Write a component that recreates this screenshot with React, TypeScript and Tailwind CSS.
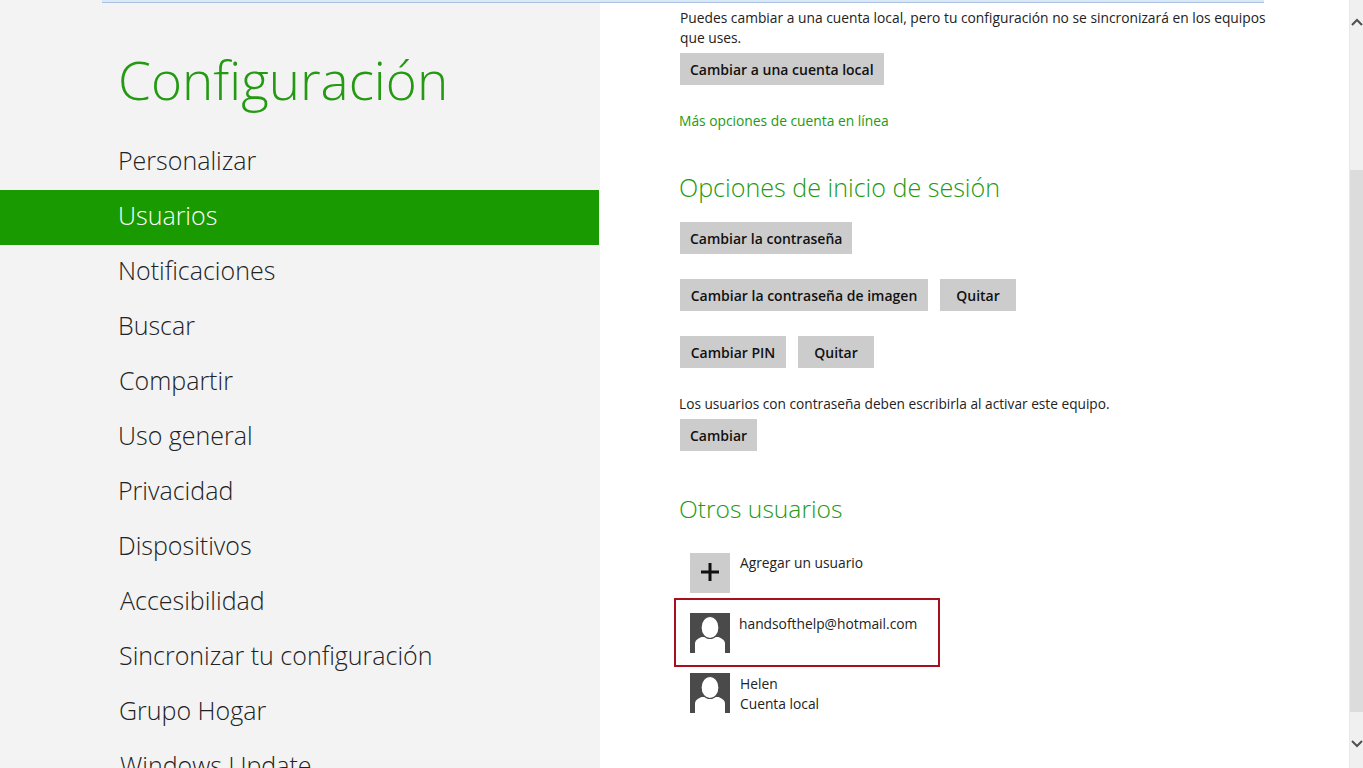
const navItems = [
  { label: 'Personalizar', indent: 'pl-[118px]' },
  { label: 'Usuarios', indent: 'pl-[118px]', active: true },
  { label: 'Notificaciones', indent: 'pl-[118px]' },
  { label: 'Buscar', indent: 'pl-[118px]' },
  { label: 'Compartir', indent: 'pl-[119px]' },
  { label: 'Uso general', indent: 'pl-[118px]' },
  { label: 'Privacidad', indent: 'pl-[118px]' },
  { label: 'Dispositivos', indent: 'pl-[118px]' },
  { label: 'Accesibilidad', indent: 'pl-[120px]' },
  { label: 'Sincronizar tu configuración', indent: 'pl-[119px]' },
  { label: 'Grupo Hogar', indent: 'pl-[119px]' },
  { label: 'Windows Update', indent: 'pl-[120px]' },
]

function GrayButton({ children, className = '' }: { children: string; className?: string }) {
  return (
    <button
      className={`h-[32px] bg-[#cccccc] px-[10px] pt-px text-[14px] font-semibold text-[#111] whitespace-nowrap ${className}`}
    >
      {children}
    </button>
  )
}

function UserAvatar() {
  return (
    <svg width="40" height="40" viewBox="0 0 40 40" className="shrink-0">
      <rect width="40" height="40" fill="#4a4a4a" />
      <path d="M5 40 V31 C5 27.5 7 26 11.5 24 L28.5 24 C33 26 35 27.5 35 31 V40 Z" fill="#fff" />
      <ellipse cx="20" cy="14.5" rx="9" ry="11" fill="#fff" stroke="#4a4a4a" strokeWidth="1.2" />
    </svg>
  )
}

export default function App() {
  return (
    <div className="relative flex h-screen overflow-hidden bg-white font-['Open_Sans',sans-serif] text-[#222]">
      {/* barra superior recortada */}
      <div className="absolute left-[102px] top-0 h-[3px] w-[1162px] border-b border-[#a9c0e0] bg-[#dbe8f7]" />

      {/* Panel izquierdo */}
      <aside className="w-[600px] shrink-0 overflow-hidden bg-[#f3f3f3]">
        <h1 className="flex h-[135px] items-start pl-[118px] pt-[40px] text-[53px] leading-[80px] font-light text-[#239a12]">
          Configuración
        </h1>
        <nav className="flex flex-col">
          {navItems.map((item) => (
            <div
              key={item.label}
              className={`flex h-[55px] w-[599px] shrink-0 items-center pb-[4px] text-[25px] font-light whitespace-nowrap ${item.indent} ${
                item.active ? 'bg-[#189a00] text-white' : 'text-[#222]'
              }`}
            >
              {item.label}
            </div>
          ))}
        </nav>
      </aside>

      {/* Contenido */}
      <main className="flex-1 pl-[79px] text-[13.8px] leading-[20px]">
        <p className="w-[600px] pl-px pt-[8px]">
          Puedes cambiar a una cuenta local, pero tu configuración no se sincronizará en los equipos que uses.
        </p>
        <div className="mt-[5px] pl-px">
          <GrayButton>Cambiar a una cuenta local</GrayButton>
        </div>
        <a className="mt-[26px] block text-[#239a12]">Más opciones de cuenta en línea</a>

        <h2 className="mt-[39px] text-[25.1px] leading-[34px] font-light text-[#239a12]">Opciones de inicio de sesión</h2>
        <div className="mt-[18px] pl-px">
          <GrayButton>Cambiar la contraseña</GrayButton>
        </div>
        <div className="mt-[25px] flex gap-[12px] pl-px">
          <GrayButton className="w-[248px]">Cambiar la contraseña de imagen</GrayButton>
          <GrayButton className="w-[76px]">Quitar</GrayButton>
        </div>
        <div className="mt-[25px] flex gap-[12px] pl-px">
          <GrayButton className="w-[106px]">Cambiar PIN</GrayButton>
          <GrayButton className="w-[76px]">Quitar</GrayButton>
        </div>
        <p className="mt-[26px] text-[13.7px]">Los usuarios con contraseña deben escribirla al activar este equipo.</p>
        <div className="mt-[5px] pl-px">
          <GrayButton>Cambiar</GrayButton>
        </div>

        <h2 className="mt-[41px] text-[24.6px] leading-[34px] font-light text-[#239a12]">Otros usuarios</h2>

        <div className="mt-[27px] flex gap-[10px] pl-[11px]">
          <div className="flex h-[40px] w-[40px] shrink-0 items-center justify-center bg-[#cccccc] pb-[2px]">
            <svg width="20" height="20" viewBox="0 0 20 20">
              <path d="M8.5 1h3v7.5H19v3h-7.5V19h-3v-7.5H1v-3h7.5z" fill="#111" />
            </svg>
          </div>
          <span>Agregar un usuario</span>
        </div>
        <div className="mt-[5px] flex h-[69px] w-[266px] -translate-x-[5px] gap-[9px] border-2 border-[#a80f1e] pl-[14px] pt-[13px]">
          <UserAvatar />
          <span className="pt-px">handsofthelp@hotmail.com</span>
        </div>
        <div className="mt-[6px] flex gap-[10px] pl-[11px]">
          <UserAvatar />
          <span className="pt-px">
            Helen
            <br />
            Cuenta local
          </span>
        </div>
      </main>

      {/* Barra de desplazamiento */}
      <div className="flex w-[14px] shrink-0 flex-col items-center border-l border-[#e8e8e8] bg-[#f0f0f0]">
        <svg width="12" height="8" viewBox="0 0 12 8" className="mt-[18px]">
          <path d="M1 7 L6 2 L11 7" fill="none" stroke="#505050" strokeWidth="2" />
        </svg>
        <div className="mt-[144px] h-[542px] w-full bg-[#dcdcdc]" />
        <svg width="12" height="8" viewBox="0 0 12 8" className="mt-[28px]">
          <path d="M1 1 L6 6 L11 1" fill="none" stroke="#505050" strokeWidth="2" />
        </svg>
      </div>
    </div>
  )
}
